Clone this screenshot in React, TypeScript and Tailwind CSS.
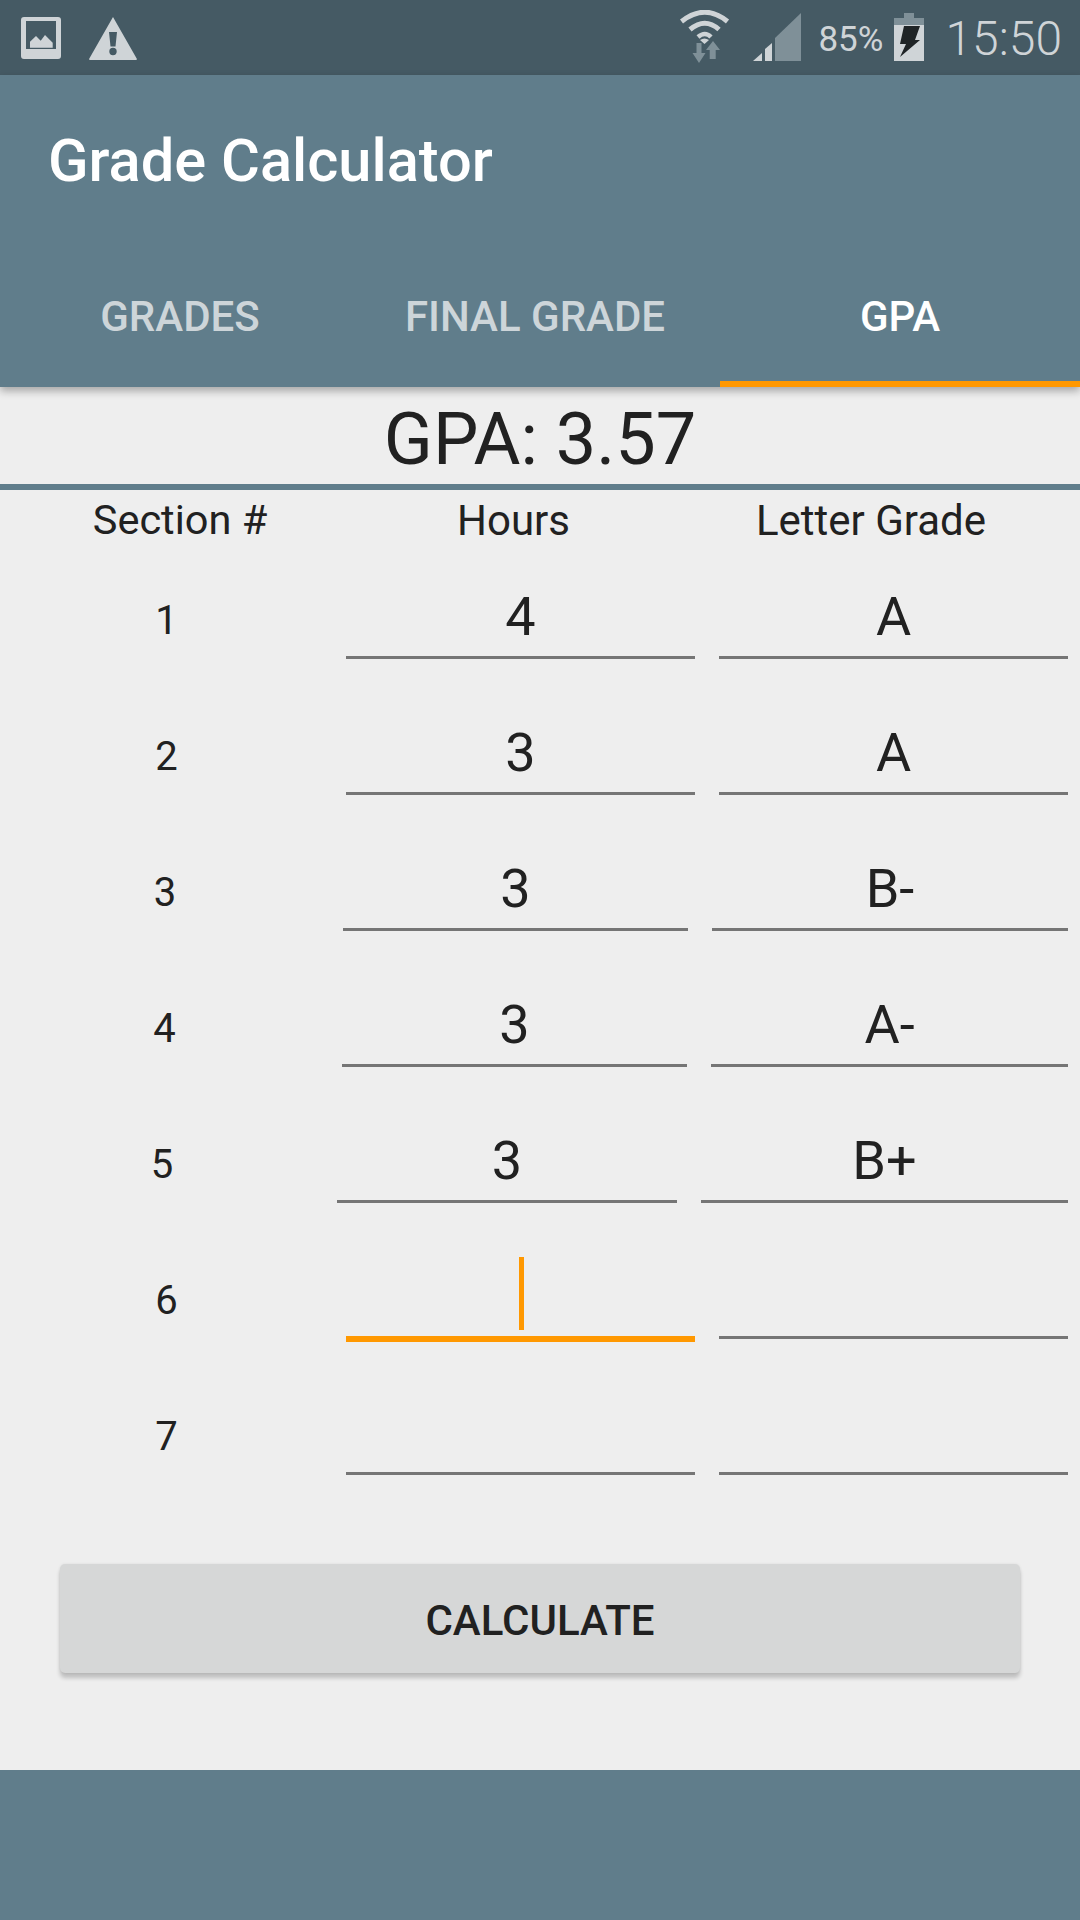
import React from "react";

type Row = {
  num: string;
  hours: string;
  grade: string;
  numClass: string;
  hoursClass: string;
  gradeClass: string;
  focused?: boolean;
};

// the columns shift a little with the content, same as the wrapped fields on the phone
const rows: Row[] = [
  { num: "1", hours: "4", grade: "A", numClass: "w-[346px]", hoursClass: "w-[349px]", gradeClass: "ml-[24px] w-[349px]" },
  { num: "2", hours: "3", grade: "A", numClass: "w-[346px]", hoursClass: "w-[349px]", gradeClass: "ml-[24px] w-[349px]" },
  { num: "3", hours: "3", grade: "B-", numClass: "w-[343px]", hoursClass: "w-[345px]", gradeClass: "ml-[24px] w-[356px]" },
  { num: "4", hours: "3", grade: "A-", numClass: "w-[342px]", hoursClass: "w-[345px]", gradeClass: "ml-[24px] w-[357px]" },
  { num: "5", hours: "3", grade: "B+", numClass: "w-[337px]", hoursClass: "w-[340px]", gradeClass: "ml-[24px] w-[367px]" },
  { num: "6", hours: "", grade: "", numClass: "w-[346px]", hoursClass: "w-[349px]", gradeClass: "ml-[24px] w-[349px]", focused: true },
  { num: "7", hours: "", grade: "", numClass: "w-[346px]", hoursClass: "w-[349px]", gradeClass: "ml-[24px] w-[349px]" },
];

function GalleryIcon() {
  return (
    <svg width="40" height="42" viewBox="0 0 40 42">
      <path
        fillRule="evenodd"
        fill="#cfd4d7"
        d="M3 0h34a3 3 0 0 1 3 3v36a3 3 0 0 1-3 3H3a3 3 0 0 1-3-3V3a3 3 0 0 1 3-3zM5 4v28h30V4z"
      />
      <path d="M9 24.700 15 19l4.700 4.700L24 18l7.700 7.700v5H9z" fill="#cfd4d7" />
    </svg>
  );
}

function WarningIcon() {
  return (
    <svg width="48" height="43" viewBox="0 0 48 43">
      <path
        fillRule="evenodd"
        clipRule="evenodd"
        fill="#cfd4d7"
        d="M24 0 47.800 41.800a.8.8 0 0 1-.7 1.200H.9a.8.8 0 0 1-.7-1.200zM20 15h8l-1.500 14.500h-5zM24 30.800a3.700 3.700 0 1 0 0 7.400 3.700 3.700 0 0 0 0-7.400z"
      />
    </svg>
  );
}

function WifiIcon() {
  return (
    <svg width="50" height="53" viewBox="0 0 50 53" fill="none">
      <path d="M1.500 11.500Q25-7 47.500 11.500" stroke="#cfd4d7" strokeWidth="5" />
      <path d="M10 19.500Q25 7 39 19.500" stroke="#cfd4d7" strokeWidth="5" />
      <path d="M18 27Q25 21 31 27" stroke="#cfd4d7" strokeWidth="4.500" />
      <path d="M20 30Q24.500 27 29 30L24.500 34z" fill="#cfd4d7" />
      <path d="M16.500 33h5v10h4L19 53l-6.500-10h4z" fill="#7f9098" />
      <path d="M33 31 40 40H35.700V49H29.700V40H26z" fill="#7f9098" />
    </svg>
  );
}

function SignalIcon() {
  return (
    <svg width="48" height="48" viewBox="0 0 48 48">
      <path d="M48 0V48H22V25z" fill="#7f9098" />
      <path d="M19 30V48H12V36z" fill="#cfd4d7" />
      <path d="M9 40V48H0z" fill="#cfd4d7" />
    </svg>
  );
}

function BatteryIcon() {
  return (
    <svg width="30" height="48" viewBox="0 0 30 48">
      <path d="M10 0h10v5h10v7H0V5h10z" fill="#7f9098" />
      <rect x="0" y="12" width="30" height="36" fill="#cfd4d7" />
      <path d="M10 13H26L21 27h5L6 44l6-13H6z" fill="#1f2426" />
    </svg>
  );
}

export default function App() {
  return (
    <div className="w-[1080px] h-[1920px] flex flex-col bg-[#eeeeee] font-['Roboto',sans-serif] text-[#212121] overflow-hidden">
      {/* status bar */}
      <div className="h-[75px] shrink-0 bg-[#455a64] flex items-center justify-between pl-[21px] pr-[18px]">
        <div className="flex items-center gap-[28px] pt-[1px]">
          <GalleryIcon />
          <WarningIcon />
        </div>
        <div className="flex items-center text-[#cfd4d7] pb-[2px]">
          <WifiIcon />
          <div className="ml-[23px]">
            <SignalIcon />
          </div>
          <span className="ml-[17px] text-[35px] leading-none pt-[5px]">85%</span>
          <div className="ml-[11px]">
            <BatteryIcon />
          </div>
          <span className="ml-[21px] text-[48px] font-light leading-none pt-[4px]">15:50</span>
        </div>
      </div>

      {/* app bar + tabs */}
      <div className="h-[312px] shrink-0 bg-[#607d8b] flex flex-col relative z-10 shadow-[0_4px_8px_rgba(0,0,0,0.3)]">
        <div className="h-[173px] flex items-center pl-[48px] text-[59.6px] font-medium text-white">Grade Calculator</div>
        <div className="flex-1 flex text-[42px] font-medium">
          <div className="w-[360px] flex items-center justify-center pb-[3px] text-[#cdd5d9]">GRADES</div>
          <div className="w-[360px] flex items-center justify-center pb-[3px] pr-[10px] text-[#cdd5d9]">FINAL GRADE</div>
          <div className="w-[360px] flex items-center justify-center pb-[3px] text-white border-y-[6px] border-t-transparent border-b-[#ff9800]">GPA</div>
        </div>
      </div>

      {/* result */}
      <div className="h-[103px] shrink-0 flex items-center justify-center pt-[8px] border-b-[6px] border-[#607d8b] text-[72px]">GPA: 3.57</div>

      {/* column titles */}
      <div className="h-[60px] shrink-0 flex items-center text-[42px]">
        <div className="w-[360px] text-center text-[41.5px]">Section #</div>
        <div className="w-[307px] text-center">Hours</div>
        <div className="w-[408px] text-center">Letter Grade</div>
      </div>

      <div className="-mt-[27px] flex flex-col">
        {rows.map((row) => (
          <div key={row.num} className="h-[136px] shrink-0 flex items-end">
            <div className={`${row.numClass} h-[76px] flex items-center justify-center pr-[13px] text-[40px]`}>{row.num}</div>
            {row.focused ? (
              <div className={`${row.hoursClass} h-[89px] -mb-[3px] flex items-end justify-center pb-[6px] pl-[2px] border-b-[6px] border-[#ff9800]`}>
                <div className="w-[5px] h-[73px] bg-[#ff9800]" />
              </div>
            ) : (
              <div className={`${row.hoursClass} h-[86px] flex items-center justify-center pt-[3px] text-[54px] border-b-[3px] border-[#757575]`}>
                {row.hours}
              </div>
            )}
            <div className={`${row.gradeClass} h-[86px] flex items-center justify-center pt-[3px] text-[54px] border-b-[3px] border-[#757575]`}>
              {row.grade}
            </div>
          </div>
        ))}
      </div>

      <div className="flex-1 px-[60px] pt-[89px]">
        <div className="h-[109px] rounded-[5px] bg-[#d6d7d7] flex items-center justify-center pt-[3px] text-[42px] font-medium shadow-[0_0_3px_rgba(0,0,0,0.08),0_5px_4px_rgba(0,0,0,0.2)]">
          CALCULATE
        </div>
      </div>

      <div className="h-[150px] shrink-0 bg-[#607d8b]" />
    </div>
  );
}
